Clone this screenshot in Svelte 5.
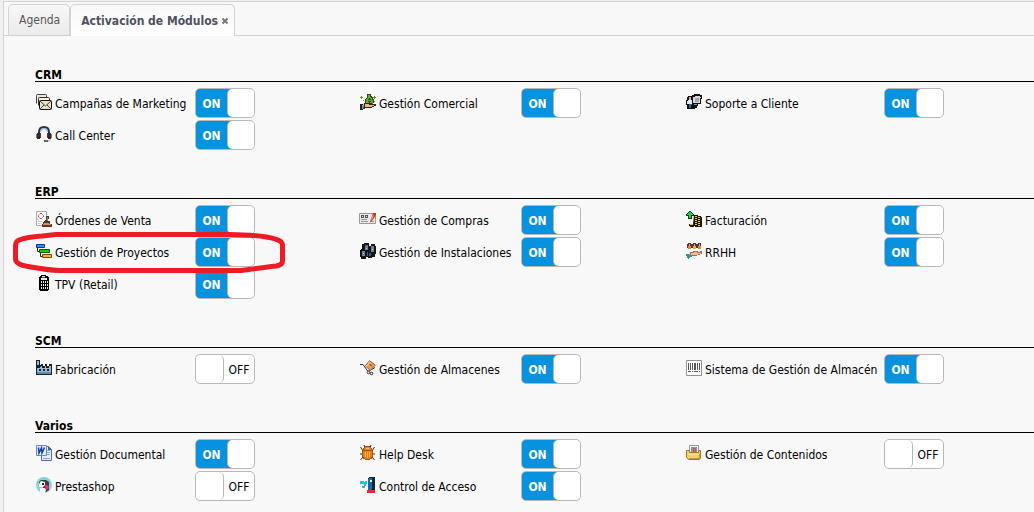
<script>
  const icons = {
    mail: `<path fill="#eee9d8" stroke="#444" d="M.5 9.500V1.500q0-1 1-1h8q1 0 1 1v2"/><path fill="#f5f0df" stroke="#333" d="M2.500 11.500V4.500q0-1 1-1h9q1 0 1 1v2"/><path fill="#e8e0c8" stroke="#111" d="M4.500 6.500h10q1 0 1 1v7q0 1-1 1h-10q-1 0-1-1v-7q0-1 1-1z"/><path fill="none" stroke="#444" d="M4 7l5.500 5L15 7M4 15l4-4M15 15l-4-4"/>`,
    headset: `<path fill="none" stroke="#26364c" stroke-width="2" d="M3 8V6q0-5 5-5t5 5v2"/><path fill="none" stroke="#7da3cc" d="M4.500 6q0-3.500 3.500-3.500T11.500 6"/><path fill="#33292d" d="M1 7h3v6H1zM12 7h3v6h-3z"/><path fill="#8d1f24" d="M4 7h1v5H4zM11 7h1v5h-1z"/><path fill="#777" d="M0 8h1v4H0zM15 8h1v4h-1z"/><path fill="none" stroke="#aaa" d="M14.500 13q0 2-3 2"/><path fill="#666" d="M8 14h4v2H8z"/>`,
    money: `<path fill="#2e4a17" d="M7 0h4v2h1v1h1v2h1v4H5V5h1V4h1z"/><path fill="#62a829" d="M8 1h2v2h1v1h1v2h1v4H6V5h1V4h1z"/><path fill="#244f11" d="M9 4h1v1h1v1H9v1h2v1h-1v1H9V8H8V7h1V6H8V5h1z"/><path fill="#36271f" d="M4 9h8v1h4v2h-2v1h-2v1H5v1H3z"/><path fill="#e9b48d" d="M5 10h4v1h5v1h-2v1H5z"/><path fill="#1e252c" d="M0 10h3v6H0z"/><path fill="#8b9499" d="M2 11h1v4H2z"/><path fill="#6d8d1e" d="M1 2h1v1h1v1H2v1H1V4H0V3h1zM3 6h1v1H3zM14 2h1v1h1v1h-1v1h-1V4h-1V3h1zM14 7h1v1h-1z"/>`,
    support: `<path fill="#111" d="M6 1h2V0h6v1h2v4h-1v5h-3v2h-1v2H9v1H3v-1H1v-3H0V6h1V3h1V2h4z"/><path fill="#d6d6d6" d="M7 3h2V2h5v1h1v1h-1v5H7z"/><path fill="#a1a6ad" d="M9 4h4v4H9z"/><path fill="#edb36d" d="M3 3h2v3H3z"/><path fill="#ddf1f5" d="M2 6h4v4H2zM1 7h1v3H1z"/><path fill="#2c7284" d="M3 10h3v1h-1v3H3z"/><path fill="#111" d="M1 14h3v1H1zM5 14h3v1H5z"/><path fill="#8b9eae" d="M8 10h3v1H8z"/>`,
    order: `<path fill="#fff" stroke="#aaa" d="M.5.5h10v14H.5z"/><path fill="none" stroke="#c92b35" stroke-dasharray="1.500 .7" d="M5 2l3 3-3 3-3-3z"/><path fill="#383838" d="M10 5h3v3h-1v2h2v2H8v-2h1V9h1z"/><path fill="#888" d="M11 6h1v4h-1z"/><path fill="#67341f" d="M7 11h7v2h2v3H6v-3h1z"/><path fill="#d69067" d="M8 12h5v1h2v1H7v-1h1z"/><path fill="#ccc" d="M2 10h4v1H2zM2 12h3v1H2z"/>`,
    gantt: `<path fill="none" stroke="#222" d="M1.500 5v3.500H4M4.500 10v3.500H7"/><path fill="#2a96ff" stroke="#0035a0" d="M.5 1.500h8v3h-8z"/><path fill="#0fd00f" stroke="#075807" d="M3.500 6.500h10v3h-10z"/><path fill="#ffb223" stroke="#7c4808" d="M6.500 11.500h9v3h-9z"/>`,
    pos: `<path fill="#000" d="M5 0h5v1h2v1h1v13h-1v1H4v-1H3V2h1V1h1z"/><path fill="#e9e9e9" d="M6 1h3v2h2v2H5V3h1zM5 6h1v2H5zM7 6h1v2H7zM9 6h1v2H9zM11 6h1v2h-1zM5 9h1v2H5zM7 9h1v2H7zM9 9h1v2H9zM11 9h1v2h-1zM5 12h1v2H5zM7 12h1v2H7zM9 12h1v2H9zM11 12h1v2h-1z"/><path fill="#555" d="M6 2h3v1H6z"/>`,
    purchases: `<path fill="#e8e8e8" stroke="#999" d="M-.5 2.500h16v10h-16z"/><path fill="#555" d="M1 4h3v3H1zM5 4h3v3H5z"/><path fill="#ddd" d="M2 5h1v1H2zM6 5h1v1H6z"/><path fill="#999" d="M1 8h6v1H1zM1 10h7v1H1zM10 10h4v1h-4z"/><path fill="#ca361b" d="M13 2h3v2l-4 6-2 1 1-3z"/><path fill="#ff9d52" d="M13 4h1l-2 5-1-1z"/>`,
    servers: `<path fill="#151515" d="M4 0h5v3h2V1h4v2h1v8h-1v3h-3v1H8v-1H6v2H1v-2H0V7h1V6h1V1h2z"/><path fill="#77808e" d="M5 2h3v5H5zM11 3h3v6h-3zM2 8h3v5H2z"/><path fill="#3558ab" d="M5 2h2v1H5zM7 9h1v4H7zM9 10h2v3H9z"/><path fill="#b9bdc3" d="M6 5h1v1H6zM12 6h1v1h-1zM3 10h1v1H3z"/>`,
    invoice: `<path fill="#073e19" d="M3 0h2v1h1v1h1v1h1v2H6v3H2V5H0V3h1V2h1V1h1z"/><path fill="#1bd353" d="M3 1h2v1h1v1h1v1H5v3H3V4H1V3h1V2h1z"/><path fill="#211804" d="M8 4h4v1h3v1h1v10H9v-1H8v1H4v-1H3v-2h4z"/><path fill="#e8ca78" d="M9 5h2v1H9zM9 7h2v1H9zM9 9h2v1H9zM9 11h2v1H9zM9 13h2v1H9zM12 6h2v1h-2zM12 8h2v1h-2zM12 10h2v1h-2zM12 12h2v1h-2zM12 14h2v1h-2zM4 13h3v1H4z"/>`,
    people: `<path fill="#5a342b" d="M2 0h3v1h2V0h3v1h2V0h3v5H1V1h1z"/><path fill="#edb081" d="M3 1h1v2H3zM8 1h1v2H8zM13 1h1v2h-1z"/><path fill="#d88a4a" d="M2 3h3v3H2zM12 3h3v3h-3z"/><path fill="#e1a95a" d="M7 3h3v3H7z"/><path fill="#a07058" d="M4 9h3V8h5v1h2V8h2v3h-2v1h-3v1H6v1H3z"/><path fill="#f1bd99" d="M5 10h3V9h3v1h4v1h-3v1H5z"/><path fill="#139eac" d="M0 11h3v1h1v3H3v1H2v-1H1v-2H0z"/>`,
    factory: `<path fill="#142330" d="M0 0h4v5h1V4h2v2h2V4h2v2h2V4h3v11H0z"/><path fill="#9bb8cf" d="M1 1h2v4H1zM5 6h1v2h3V6h1v2h3V6h2v8H1V7h4z"/><path fill="#142330" d="M3 9h2v2H3zM7 9h2v2H7zM11 9h2v2h-2zM1 7h3v1H1z"/><path fill="#638bae" d="M1 12h14v2H1z"/>`,
    trolley: `<path fill="none" stroke="#333" d="M0 4.500h3l5 7 7-4"/><path fill="#e69b54" stroke="#a0622f" d="M9.500.7l5.800 4.300-5 5.500L5.300 5.800z"/><path fill="#f6c28a" d="M9 2l2 1-4 4-1-1z"/><path fill="#b7532a" d="M9 4h2v1h1v1h-2V5H9z"/><circle cx="8.500" cy="12.500" r="1.300" fill="#eee" stroke="#333"/><circle cx="11.500" cy="13.500" r="1.300" fill="#eee" stroke="#333"/>`,
    barcode: `<path fill="#fff" stroke="#929292" d="M.5.5h15v15H.5z"/><path fill="#555" d="M2 3h1v7H2zM4 3h1v7H4zM6 3h1v7H6zM8 3h2v7H8zM11 3h1v7h-1zM13 3h1v7h-1zM2 11h3v1H2zM6 11h1v1H6zM8 11h4v1H8zM13 11h1v1h-1z"/>`,
    word: `<path fill="#e6edfb" stroke="#526ba9" d="M5.500 1.500h7l3 3v11h-10z"/><path fill="#8da7dd" d="M11 5h3v1h-3zM11 7h3v1h-3zM11 9h3v1h-3zM7 13h7v1H7z"/><path fill="#e1eafb" stroke="#6c89c6" d="M.5.5h10v10H.5z"/><path fill="none" stroke="#153f99" stroke-width="1.500" d="M2.500 2.500L3 8l2.500-5L6 8l2.500-5.500"/><path fill="#4062a9" d="M12 1l4 4h-4z"/>`,
    bug: `<path fill="none" stroke="#3a3128" d="M5 3L4 0M10 3l1-3M3 6L.5 2M12 6l2.500-4M2 9H0M13 9h2M3 12l-2.500 3M12 12l2.500 3"/><path fill="#b34e08" d="M5 1h5v2h2v2h1v7h-1v2h-2v1H5v-1H3v-2H2V5h1V3h2z"/><path fill="#ed801b" d="M5 2h5v1h1v2H4V3h1zM3 6h9v6h-1v1h-1v1H5v-1H4v-1H3z"/><path fill="#ffc05d" d="M5 7h1v5H5zM7 7h1v6H7zM9 7h1v5H9zM6 3h3v1H6z"/><path fill="#b34e08" d="M3 5h9v1H3z"/>`,
    folder: `<path fill="#fff" stroke="#999" d="M3.500.5h9v10h-9z"/><path fill="#50a4e5" d="M5 2h6v5H5z"/><path fill="#e25541" d="M7 3h3v4H7z"/><path fill="#f8cf65" stroke="#ad781d" d="M.5 5.500h3v2h9v-2h2v8l-1 1H2.500l-2-2z"/><path fill="#ffe69a" d="M2 9h11v1H2z"/><path fill="#c8973c" d="M13 9h1v5H3v-1h10z"/>`,
    presta: `<circle cx="8" cy="8" r="8" fill="#85d2dd"/><path fill="#403a3a" d="M5 3h5l3 2v8l-3 2H7V9H3V5z"/><path fill="#fff" d="M3 7l2-3 4 1v3l-2 2H3z"/><path fill="#292929" d="M6 6h2v2H6z"/><path fill="#e72c6b" d="M9 8h3l1 3-2 2-2-2z"/><path fill="#f6f6f6" d="M4 11h5l1 2-1 3H6l-2-1z"/>`,
    access: `<path fill="#08283e" d="M9 0h6v13H8V1h1z"/><path fill="#176ba0" d="M9 1h3v12H8V2h1z"/><path fill="#d9eff9" d="M10 3h2v2h-2z"/><path fill="#22bdea" d="M0 4h4v1h1V4h2v3H6v2H5v2H2V9h2V7H0z"/><path fill="#ee2735" d="M7 13h8v3H7z"/>`
  };

  // Modules flow three to a row: [icon, name, enabled]
  const sections = $state([
    { title: 'CRM', items: [
      ['mail', 'Campañas de Marketing', true], ['money', 'Gestión Comercial', true], ['support', 'Soporte a Cliente', true],
      ['headset', 'Call Center', true]
    ] },
    { title: 'ERP', items: [
      ['order', 'Órdenes de Venta', true], ['purchases', 'Gestión de Compras', true], ['invoice', 'Facturación', true],
      ['gantt', 'Gestión de Proyectos', true], ['servers', 'Gestión de Instalaciones', true], ['people', 'RRHH', true],
      ['pos', 'TPV (Retail)', true]
    ] },
    { title: 'SCM', items: [
      ['factory', 'Fabricación', false], ['trolley', 'Gestión de Almacenes', true], ['barcode', 'Sistema de Gestión de Almacén', true]
    ] },
    { title: 'Varios', items: [
      ['word', 'Gestión Documental', true], ['bug', 'Help Desk', true], ['folder', 'Gestión de Contenidos', false],
      ['presta', 'Prestashop', false], ['access', 'Control de Acceso', true]
    ] }
  ]);
</script>

<div class="frame">
  <nav class="tabs">
    <button class="tab">Agenda</button>
    <div class="tab active">
      <button class="plain">Activación de Módulos</button>
      <button class="plain" aria-label="Cerrar">
        <svg width="6" height="6" viewBox="0 0 6 6"><path d="M.5.5l5 5M5.500.5l-5 5" stroke="#74798a" stroke-width="2" /></svg>
      </button>
    </div>
  </nav>

  <main>
    {#each sections as section}
      <section>
        <h2>{section.title}</h2>
        <div class="grid">
          {#each section.items as item}
            <div class="cell" class:marked={item[0] === 'gantt'}>
              <label class="name" for={item[0]}>
                <svg class="icon" viewBox="0 0 16 16" aria-hidden="true">{@html icons[item[0]]}</svg>
                {item[1]}
              </label>
              {#if item[0] === 'gantt'}
                <svg class="mark" viewBox="0 0 276 44" aria-hidden="true">
                  <path d="M2.500 15Q2.500 10.500 6 9Q14 6 29 5L43 3.500H216Q250 4 262 8Q269.500 10 269.500 14V30Q269.500 34 263 35Q250 36.500 228 39.500H47Q34 39 18 36Q2.500 34 2.500 28Z" />
                </svg>
              {/if}
            </div>
            <div class="cell">
              <span class="switch" class:on={item[2]}>
                <input type="checkbox" id={item[0]} bind:checked={item[2]} />
                <span class="state">{item[2] ? 'ON' : 'OFF'}</span>
                <span class="knob"></span>
              </span>
            </div>
          {/each}
        </div>
      </section>
    {/each}
  </main>
</div>

<style>
  :global(body) {
    margin: 0;
    background: #f0f0f0;
  }
  .frame {
    margin: 1px 0 0 3px;
    min-height: calc(100vh - 2px);
    border-top: 1px solid #d3d3d3;
    border-left: 1px solid #d3d3d3;
    background: #f8f8f8;
    color: #000;
    font: 12px/16px "DejaVu Sans Condensed", Tahoma, "DejaVu Sans", sans-serif;
    overflow: hidden;
  }
  .tabs {
    display: flex;
    height: 34px;
    padding: 2px 0 0 4px;
    box-sizing: border-box;
    border-bottom: 1px solid #d3d3d3;
  }
  .tab {
    display: flex;
    align-items: center;
    gap: 4px;
    height: 31px;
    padding: 0 9px 0 10px;
    box-sizing: border-box;
    border: 1px solid #d3d3d3;
    border-bottom: 0;
    border-radius: 5px 5px 0 0;
    background: linear-gradient(#f7f7f7, #ebebeb);
    color: #555;
    font: inherit;
  }
  .tab.active {
    height: 32px;
    padding: 0 6px 0 10px;
    background: linear-gradient(#f8f8f8, #fff);
    color: #4f5060;
    font-weight: bold;
  }
  .plain {
    display: flex;
    padding: 0;
    border: 0;
    background: none;
    color: inherit;
    font: inherit;
  }
  main {
    padding: 32px 0 0 31px;
  }
  section {
    margin-bottom: 34px;
  }
  h2 {
    height: 13px;
    margin: 0 0 5px;
    border-bottom: 1px solid #000;
    font-size: 12px;
    line-height: 14px;
  }
  .grid {
    display: grid;
    grid-template-columns: 160px 164fr 162px 164fr 199px 150fr;
    grid-auto-rows: 32px;
  }
  .cell {
    display: flex;
    align-items: center;
  }
  .marked {
    position: relative;
  }
  .name {
    display: flex;
    align-items: center;
    gap: 3px;
    padding: 2px 0 0 1px;
    white-space: nowrap;
  }
  .icon {
    flex: none;
    width: 16px;
    height: 16px;
    margin-bottom: 4px;
    overflow: visible;
  }
  .mark {
    position: absolute;
    z-index: 1;
    left: -22px;
    top: -5px;
    width: 276px;
    height: 44px;
    pointer-events: none;
  }
  .mark path {
    fill: none;
    stroke: #ed1c24;
    stroke-width: 5;
    stroke-linejoin: round;
  }
  .switch {
    position: relative;
    display: flex;
    flex-direction: row-reverse;
    width: 60px;
    height: 30px;
    box-sizing: border-box;
    border: 1px solid #b8b8b8;
    border-radius: 5px;
    background: #fff;
    overflow: hidden;
  }
  .switch.on {
    flex-direction: row;
    background: linear-gradient(90deg, #0692de 40px, #fff 40px);
  }
  .switch input {
    position: absolute;
    inset: 0;
    width: 100%;
    height: 100%;
    margin: 0;
    opacity: 0;
    cursor: pointer;
  }
  .state {
    flex: 1;
    line-height: 30px;
    text-align: center;
  }
  .on .state {
    color: #fff;
    font-weight: bold;
  }
  .knob {
    width: 28px;
    box-sizing: border-box;
    border-right: 1px solid #b8b8b8;
    border-radius: 5px;
    background: #fff;
  }
  .on .knob {
    width: 27px;
    border-right: 0;
    border-left: 1px solid #b8b8b8;
  }
</style>
